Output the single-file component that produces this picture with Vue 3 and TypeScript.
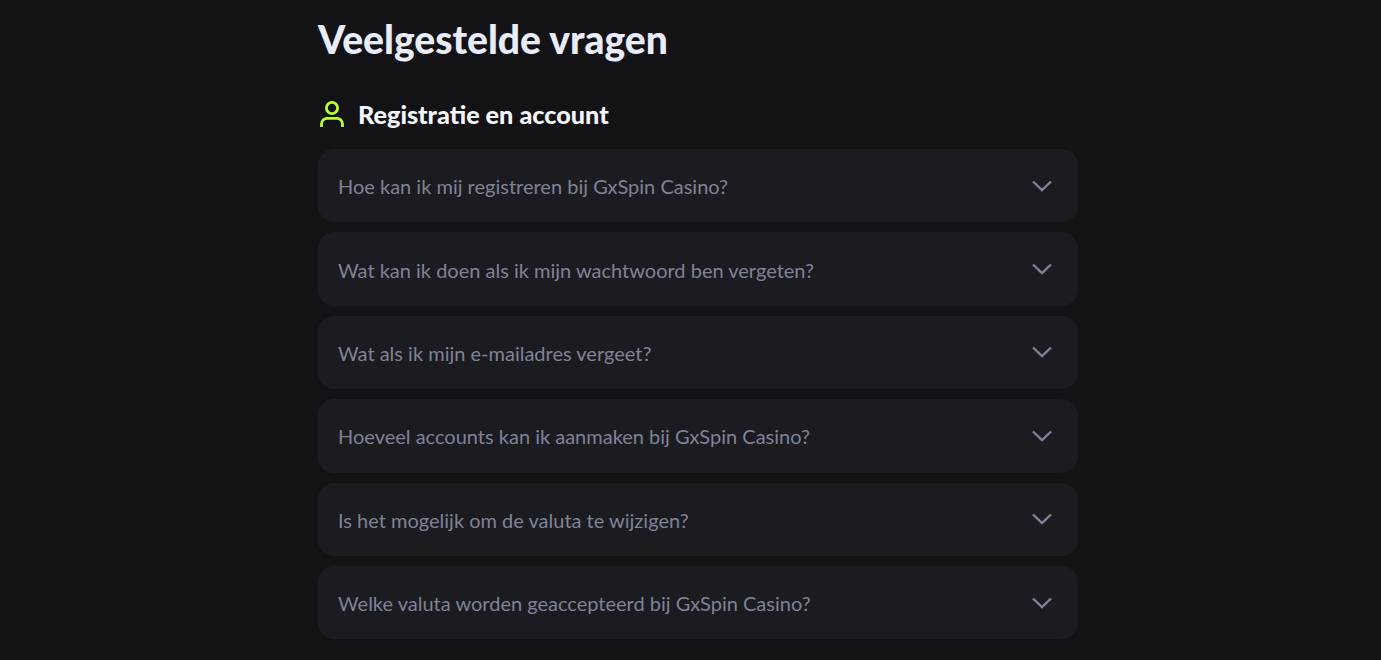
<script setup lang="ts">
const questions: string[] = [
  'Hoe kan ik mij registreren bij GxSpin Casino?',
  'Wat kan ik doen als ik mijn wachtwoord ben vergeten?',
  'Wat als ik mijn e-mailadres vergeet?',
  'Hoeveel accounts kan ik aanmaken bij GxSpin Casino?',
  'Is het mogelijk om de valuta te wijzigen?',
  'Welke valuta worden geaccepteerd bij GxSpin Casino?',
]
</script>

<template>
  <main class="page">
    <section class="faq">
      <h1 class="title">Veelgestelde vragen</h1>
      <h2 class="cat">
        <svg class="cat-icon" viewBox="0 0 24 26" fill="none" stroke="#b4ff33" stroke-width="2.8">
          <circle cx="12" cy="7" r="5.6" />
          <path d="M1.5 26v-3a5.6 5.6 0 0 1 5.6-5.6h9.8a5.6 5.6 0 0 1 5.6 5.6v3" />
        </svg>
        <span>Registratie en account</span>
      </h2>
      <div class="list">
        <div v-for="q in questions" :key="q" class="row">
          <span class="q">{{ q }}</span>
          <svg class="chev" viewBox="0 0 20 12" fill="none" stroke="#7f8297" stroke-width="2.4">
            <path d="M1 1.5l9 8.6 9-8.6" />
          </svg>
        </div>
      </div>
    </section>
  </main>
</template>

<style scoped>
.page {
  display: flex;
  justify-content: flex-start;
  box-sizing: border-box;
  height: 660px;
  padding-left: 318px;
  overflow: hidden;
  background: #131315;
  font-family: Lato, "Noto Sans", sans-serif;
}
.faq {
  width: 760px;
}
.title {
  margin: 0;
  padding-top: 15px;
  height: 48px;
  line-height: 48px;
  font-size: 39px;
  font-weight: 900;
  color: #e9ecfa;
}
.cat {
  display: flex;
  align-items: center;
  gap: 12px;
  margin: 32px 0 17px;
  height: 37px;
  font-size: 25.2px;
  font-weight: 900;
  color: #f4f6fc;
}
.cat-icon {
  width: 24px;
  height: 26px;
  margin-left: 2px;
  margin-right: 2px;
}
.list {
  display: flex;
  flex-direction: column;
  gap: 10px;
}
.row {
  display: flex;
  align-items: center;
  justify-content: space-between;
  box-sizing: border-box;
  height: 73.4px;
  padding: 0 26px 0 20px;
  border-radius: 16px;
  background: #1b1c20;
}
.q {
  font-size: 20px;
  color: #7f8297;
  padding-top: 1px;
}
.chev {
  width: 20px;
  height: 12px;
}
</style>
<style>
html, body { margin: 0; background: #131315; }
</style>
